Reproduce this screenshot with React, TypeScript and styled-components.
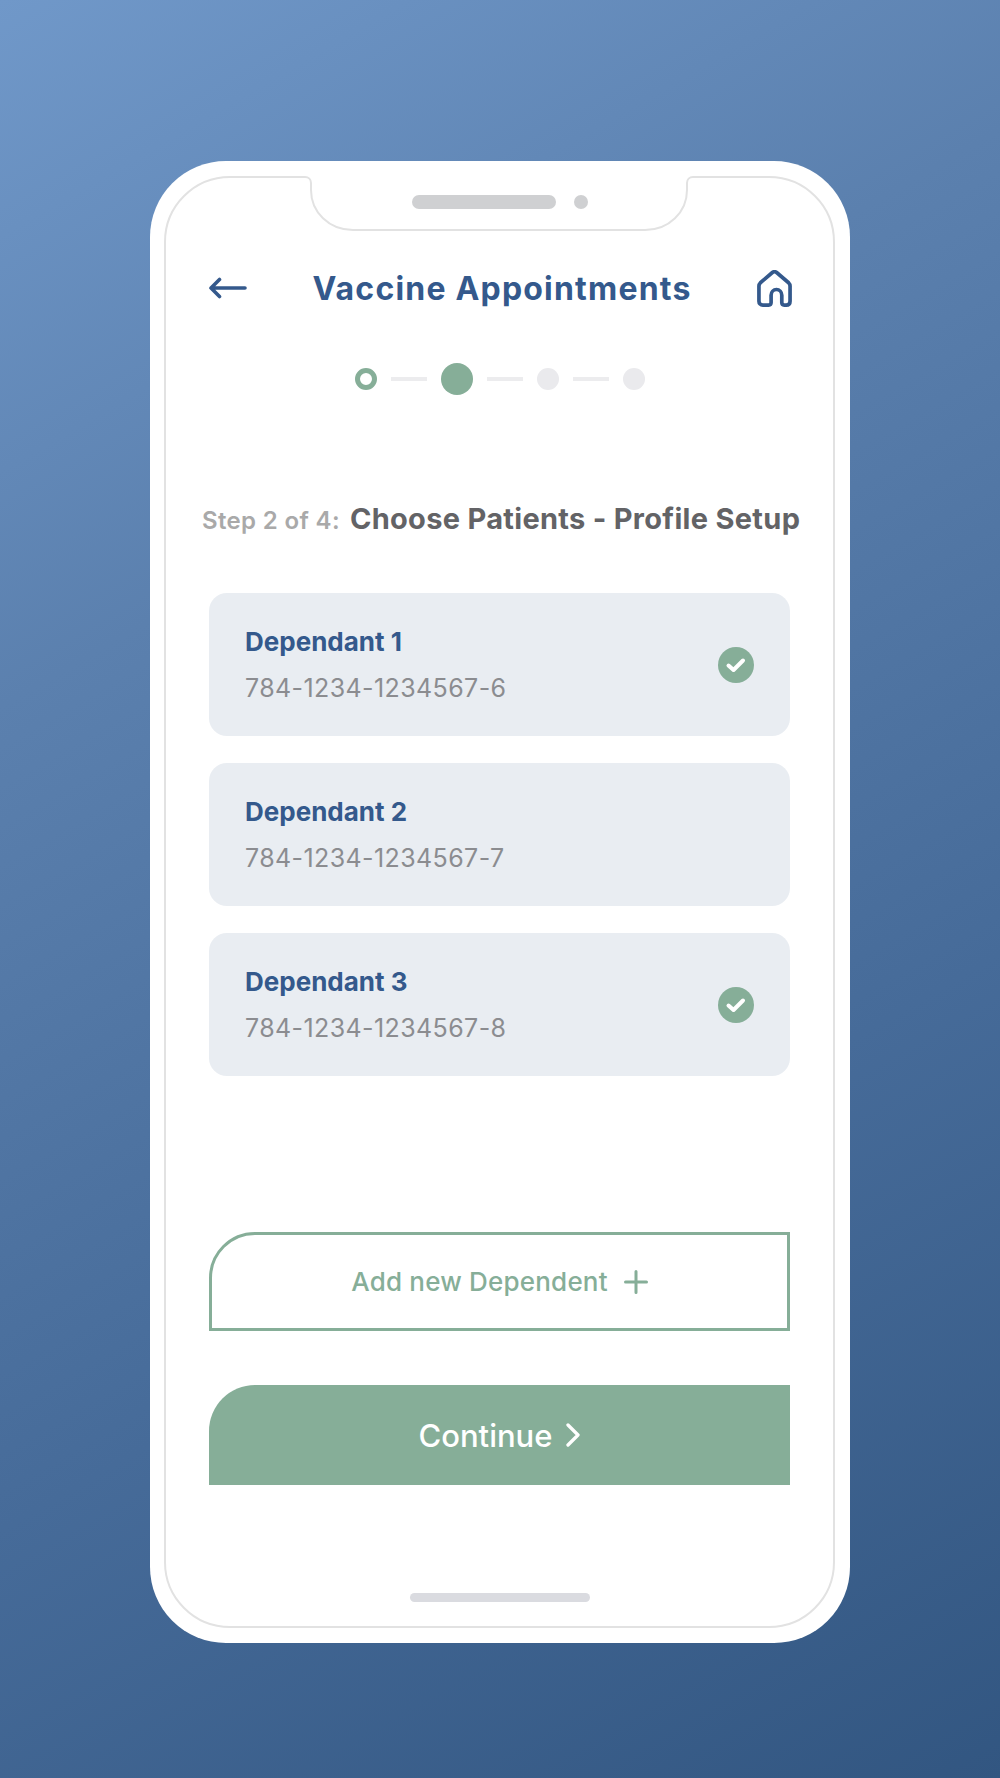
import React from "react";
import styled, { createGlobalStyle } from "styled-components";

const GlobalStyle = createGlobalStyle`
  html, body { margin: 0; padding: 0; }
  body { font-family: "Inter", "Liberation Sans", sans-serif; }
`;

const NAVY = "#34598c";
const GREEN = "#86ae98";

const dependants = [
  { name: "Dependant 1", id: "784-1234-1234567-6", checked: true },
  { name: "Dependant 2", id: "784-1234-1234567-7", checked: false },
  { name: "Dependant 3", id: "784-1234-1234567-8", checked: true },
];

const BackIcon = () => (
  <svg width="38" height="22" viewBox="0 0 38 22" fill="none" stroke={NAVY} strokeWidth="3.6" strokeLinecap="round" strokeLinejoin="round">
    <path d="M2 11h34M10.500 2.500 2 11l8.500 8.500" />
  </svg>
);

const HomeIcon = () => (
  <HomeSvg width="35" height="37" viewBox="0 0 36 38" fill="none" stroke={NAVY} strokeWidth="3.8" strokeLinecap="round" strokeLinejoin="round">
    <path d="M2 16.500c0-1.500.6-2.500 1.500-3.400L15.500 2.800c1.500-1.300 3.500-1.300 5 0l12 10.300c.9.900 1.500 1.900 1.500 3.400V32c0 2.400-1.600 4-4 4h-2c-1.400 0-2.500-1-2.500-2.500V26c0-3.300-2.500-6-5.500-6s-5.500 2.700-5.500 6v7.500c0 1.500-1.100 2.500-2.500 2.500H6c-2.400 0-4-1.600-4-4z" />
  </HomeSvg>
);

const CheckIcon = () => (
  <svg width="36" height="36" viewBox="0 0 36 36">
    <circle cx="18" cy="18" r="18" fill={GREEN} />
    <path d="M10.500 18.500l5 4.500 9.500-9.500" fill="none" stroke="#fff" strokeWidth="4" strokeLinecap="round" strokeLinejoin="round" />
  </svg>
);

const PlusIcon = () => (
  <svg width="24" height="24" viewBox="0 0 24 24" fill="none" stroke={GREEN} strokeWidth="3" strokeLinecap="round">
    <path d="M12 1.500v21M1.500 12h21" />
  </svg>
);

const ChevronIcon = () => (
  <svg width="14" height="24" viewBox="0 0 14 24" fill="none" stroke="#fff" strokeWidth="3.300" strokeLinecap="round" strokeLinejoin="round">
    <path d="M2 2l10 10L2 22" />
  </svg>
);

const App = () => {
  return (
    <Page>
      <GlobalStyle />
      <Phone>
        <Screen>
          <NotchShape width="398" height="56" viewBox="0 0 398 56" fill="none">
            <path d="M5 0h388v3H5z" fill="#fff" />
            <path d="M0 1h5c3.500 0 6 2.500 6 6v7c0 22 18 40 42 40h292c24 0 42-18 42-40V7c0-3.500 2.500-6 6-6h5" fill="#fff" stroke="#e2e2e2" strokeWidth="2" />
          </NotchShape>
          <Speaker>
            <SpeakerBar />
            <Camera />
          </Speaker>
          <Header>
            <BackIcon />
            <Title>Vaccine Appointments</Title>
            <HomeIcon />
          </Header>
          <Stepper>
            <Ring />
            <StepLine />
            <StepDot $active />
            <StepLine />
            <StepDot />
            <StepLine />
            <StepDot />
          </Stepper>
          <StepHeading>
            <StepCount>Step 2 of 4:</StepCount>
            <StepName>Choose Patients - Profile Setup</StepName>
          </StepHeading>
          <CardList>
            {dependants.map((d) => (
              <Card key={d.name}>
                <div>
                  <CardName>{d.name}</CardName>
                  <CardId>{d.id}</CardId>
                </div>
                {d.checked && <CheckIcon />}
              </Card>
            ))}
          </CardList>
          <OutlineButton>
            Add new Dependent
            <PlusIcon />
          </OutlineButton>
          <PrimaryButton>
            Continue
            <ChevronIcon />
          </PrimaryButton>
          <HomeBar />
        </Screen>
      </Phone>
    </Page>
  );
};

export default App;

const Page = styled.div`
  width: 1000px;
  height: 1778px;
  display: flex;
  justify-content: center;
  align-items: flex-start;
  padding-top: 161px;
  box-sizing: border-box;
  background: linear-gradient(150deg, #7098c9 0%, #5b80ae 30%, #466b99 65%, #325681 100%);
  overflow: hidden;
`;

const Phone = styled.div`
  width: 700px;
  height: 1482px;
  padding: 15px 15px 15px 14px;
  box-sizing: border-box;
  background: #fff;
  border-radius: 76px;
`;

const Screen = styled.div`
  position: relative;
  height: 100%;
  box-sizing: border-box;
  border: 2px solid #e2e2e2;
  border-radius: 66px;
  padding: 0 43px;
  display: flex;
  flex-direction: column;
  align-items: stretch;
`;

const NotchShape = styled.svg`
  position: absolute;
  top: -2px;
  left: 134px;
`;

const Speaker = styled.div`
  position: absolute;
  top: 17px;
  left: 246px;
  display: flex;
  align-items: center;
  gap: 18px;
`;

const SpeakerBar = styled.div`
  width: 144px;
  height: 14px;
  border-radius: 7px;
  background: #cfd0d2;
`;

const Camera = styled.div`
  width: 14px;
  height: 14px;
  border-radius: 50%;
  background: #cfd0d2;
`;

const Header = styled.div`
  margin-top: 90px;
  height: 40px;
  display: flex;
  align-items: center;
  justify-content: space-between;
`;

const HomeSvg = styled.svg`
  margin-right: -2px;
`;

const Title = styled.div`
  font-size: 32px;
  font-weight: 650;
  color: ${NAVY};
  letter-spacing: 1.200px;
`;

const Stepper = styled.div`
  margin-top: 54px;
  height: 34px;
  display: flex;
  align-items: center;
  justify-content: center;
  gap: 14px;
`;

const Ring = styled.div`
  width: 22px;
  height: 22px;
  box-sizing: border-box;
  border: 5px solid ${GREEN};
  border-radius: 50%;
`;

const StepDot = styled.div<{ $active?: boolean }>`
  width: ${(p) => (p.$active ? 32 : 22)}px;
  height: ${(p) => (p.$active ? 32 : 22)}px;
  border-radius: 50%;
  background: ${(p) => (p.$active ? GREEN : "#eaeaed")};
`;

const StepLine = styled.div`
  width: 36px;
  height: 4px;
  background: #ececee;
`;

const StepHeading = styled.div`
  margin: 105px -26px 0 -7px;
  display: flex;
  align-items: baseline;
  gap: 10px;
  white-space: nowrap;
`;

const StepCount = styled.span`
  font-size: 24px;
  font-weight: 600;
  color: #a9a9a9;
  letter-spacing: 0.350px;
`;

const StepName = styled.span`
  font-size: 29px;
  font-weight: 650;
  color: #636366;
  letter-spacing: 0.300px;
`;

const CardList = styled.div`
  margin-top: 57px;
  display: flex;
  flex-direction: column;
  gap: 27px;
`;

const Card = styled.div`
  height: 143px;
  box-sizing: border-box;
  padding: 0 36px;
  border-radius: 18px;
  background: #e9edf2;
  display: flex;
  align-items: center;
  justify-content: space-between;
`;

const CardName = styled.div`
  font-size: 26px;
  font-weight: 650;
  color: ${NAVY};
  line-height: 36px;
`;

const CardId = styled.div`
  margin-top: 10px;
  font-size: 25px;
  color: #8b8c90;
  line-height: 36px;
  letter-spacing: 0.400px;
`;

const OutlineButton = styled.div`
  margin-top: 156px;
  height: 99px;
  box-sizing: border-box;
  border: 3px solid ${GREEN};
  border-top-left-radius: 46px;
  display: flex;
  align-items: center;
  justify-content: center;
  gap: 16px;
  font-size: 26px;
  font-weight: 500;
  letter-spacing: 0.200px;
  color: ${GREEN};
`;

const PrimaryButton = styled.div`
  margin-top: 54px;
  height: 100px;
  border-top-left-radius: 46px;
  background: ${GREEN};
  display: flex;
  align-items: center;
  justify-content: center;
  gap: 14px;
  font-size: 31px;
  font-weight: 500;
  color: #fff;
`;

const HomeBar = styled.div`
  position: absolute;
  bottom: 24px;
  left: 244px;
  width: 180px;
  height: 9px;
  border-radius: 5px;
  background: #dadbe0;
`;
